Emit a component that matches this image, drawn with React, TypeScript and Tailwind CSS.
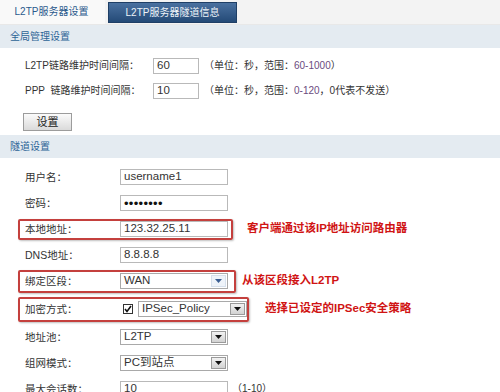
import React from "react";

function TextBox({ value, w, pw }: { value: string; w: string; pw?: boolean }) {
  return (
    <div
      className={`${w} h-[16px] border border-[#b9b9b9] bg-white flex items-center px-[3px] text-[11.5px] text-[#333] leading-none overflow-hidden whitespace-nowrap`}
    >
      {pw ? <span className="text-[13px] tracking-[0.3px] text-[#111]">{value}</span> : value}
    </div>
  );
}

function Select({ value, w, blue }: { value: string; w: string; blue?: boolean }) {
  return (
    <div className={`${w} h-[16px] border border-[#a9a9a9] bg-white flex items-stretch text-[11.5px] text-[#333] leading-none`}>
      <div className="flex-1 flex items-center px-[3px] whitespace-nowrap">{value}</div>
      {blue ? (
        <div className="w-[15px] m-[1px] flex items-center justify-center bg-[#eef3f9] border border-[#d6e0ec]">
          <svg width="7" height="4" viewBox="0 0 7 4">
            <path d="M0 0 L7 0 L3.5 4 Z" fill="#3a5e93" />
          </svg>
        </div>
      ) : (
        <div className="w-[15px] m-[1px] flex items-center justify-center bg-gradient-to-b from-[#f2f2f2] to-[#d2d2d2] border border-[#9a9a9a]">
          <svg width="7" height="4" viewBox="0 0 7 4">
            <path d="M0 0 L7 0 L3.5 4 Z" fill="#111" />
          </svg>
        </div>
      )}
    </div>
  );
}

function Label({ children }: { children: React.ReactNode }) {
  return <div className="w-[95px] shrink-0 text-[10.5px] text-[#333] leading-none whitespace-nowrap">{children}</div>;
}

function Note({ children, ml }: { children: React.ReactNode; ml: string }) {
  return (
    <div className={`${ml} text-[11.5px] font-bold text-[#d01414] leading-none whitespace-nowrap`}>{children}</div>
  );
}

export default function App() {
  return (
    <div className="w-[500px] h-[392px] overflow-hidden bg-white font-['Liberation_Sans','Noto_Sans_CJK_SC',sans-serif]">
      {/* Tabs */}
      <div className="h-[25px] bg-[#f3f3f3] flex items-end border-b border-[#e8e8e8]">
        <div className="w-[105px] h-[25px] bg-[#f9f9f9] flex items-center justify-center pr-[2px] text-[10px] text-[#2b5a8c] leading-none">
          L2TP服务器设置
        </div>
        <div className="ml-[3px] mb-[1px] w-[129px] h-[21px] flex items-center justify-center bg-gradient-to-b from-[#4a71a0] to-[#244a77] border border-[#1f3f66] text-[10px] text-[#eef3f8] leading-none">
          L2TP服务器隧道信息
        </div>
      </div>

      {/* Section 1 header */}
      <div className="h-[23px] bg-[#e4ebf1] flex items-center pl-[10px] text-[10px] text-[#2d6496] leading-none">
        全局管理设置
      </div>

      <div className="pt-[5px] pb-[4px]">
        <div className="h-[25px] flex items-center pl-[25px]">
          <div className="w-[128px] shrink-0 text-[10px] text-[#333] leading-none whitespace-nowrap">L2TP链路维护时间间隔：</div>
          <TextBox value="60" w="w-[46px]" />
          <div className="ml-[5px] text-[10px] text-[#333] leading-none whitespace-nowrap">
            （单位：秒，范围：<span className="text-[#6b4b80]">60-1000</span>）
          </div>
        </div>
        <div className="h-[25px] flex items-center pl-[25px]">
          <div className="w-[128px] shrink-0 text-[10px] text-[#333] leading-none whitespace-nowrap">PPP&nbsp;&nbsp;链路维护时间间隔：</div>
          <TextBox value="10" w="w-[46px]" />
          <div className="ml-[5px] text-[10px] text-[#333] leading-none whitespace-nowrap">
            （单位：秒，范围：<span className="text-[#6b4b80]">0-120</span>，0代表不发送）
          </div>
        </div>
        <div className="ml-[23px] mt-[10px] w-[49px] h-[18px] border border-[#9c9c9c] bg-gradient-to-b from-[#fbfbfb] to-[#dadada] flex items-center justify-center text-[11px] text-[#222] leading-none">
          设置
        </div>
      </div>

      {/* Section 2 header */}
      <div className="h-[23px] bg-[#e4ebf1] flex items-center pl-[10px] text-[10px] text-[#2d6496] leading-none">
        隧道设置
      </div>

      <div className="pt-[6px]">
        <div className="h-[26px] flex items-center pl-[25px]">
          <Label>用户名：</Label>
          <TextBox value="username1" w="w-[108px]" />
        </div>
        <div className="h-[26px] flex items-center pl-[25px]">
          <Label>密码：</Label>
          <TextBox value="••••••••" w="w-[108px]" pw />
        </div>
        <div className="h-[26px] flex items-center pl-[18px]">
          <div className="w-[215px] h-[21px] border-2 border-[#c4403d] rounded-[2px] shadow-[1px_1px_2px_rgba(0,0,0,0.25)] flex items-center pl-[5px]">
            <Label>本地地址：</Label>
            <TextBox value="123.32.25.11" w="w-[108px]" />
          </div>
          <Note ml="ml-[14px]">客户端通过该IP地址访问路由器</Note>
        </div>
        <div className="h-[26px] flex items-center pl-[25px]">
          <Label>DNS地址：</Label>
          <TextBox value="8.8.8.8" w="w-[108px]" />
        </div>
        <div className="h-[26px] flex items-center pl-[18px]">
          <div className="w-[218px] h-[23px] border-2 border-[#c4403d] rounded-[2px] shadow-[1px_1px_2px_rgba(0,0,0,0.25)] flex items-center pl-[5px]">
            <Label>绑定区段：</Label>
            <Select value="WAN" w="w-[108px]" blue />
          </div>
          <Note ml="ml-[6px]">从该区段接入L2TP</Note>
        </div>
        <div className="h-[30px] flex items-center pl-[18px]">
          <div className="w-[231px] h-[25px] border-2 border-[#c4403d] rounded-[2px] shadow-[1px_1px_2px_rgba(0,0,0,0.25)] flex items-center pl-[5px]">
            <Label>加密方式：</Label>
            <div className="ml-[3px] w-[10px] h-[10px] border border-[#333] bg-white flex items-center justify-center">
              <svg width="8" height="8" viewBox="0 0 8 8">
                <path d="M1 4 L3 6.5 L7 1" stroke="#111" strokeWidth="1.6" fill="none" />
              </svg>
            </div>
            <div className="ml-[5px]">
              <Select value="IPSec_Policy" w="w-[109px]" />
            </div>
          </div>
          <Note ml="ml-[16px]">选择已设定的IPSec安全策略</Note>
        </div>
        <div className="h-[26px] flex items-center pl-[25px]">
          <Label>地址池：</Label>
          <Select value="L2TP" w="w-[108px]" />
        </div>
        <div className="h-[26px] flex items-center pl-[25px]">
          <Label>组网模式：</Label>
          <Select value="PC到站点" w="w-[108px]" />
        </div>
        <div className="h-[26px] flex items-center pl-[25px]">
          <Label>最大会话数：</Label>
          <TextBox value="10" w="w-[108px]" />
          <div className="ml-[4px] text-[10px] text-[#333] leading-none whitespace-nowrap">（1-10）</div>
        </div>
      </div>
    </div>
  );
}
